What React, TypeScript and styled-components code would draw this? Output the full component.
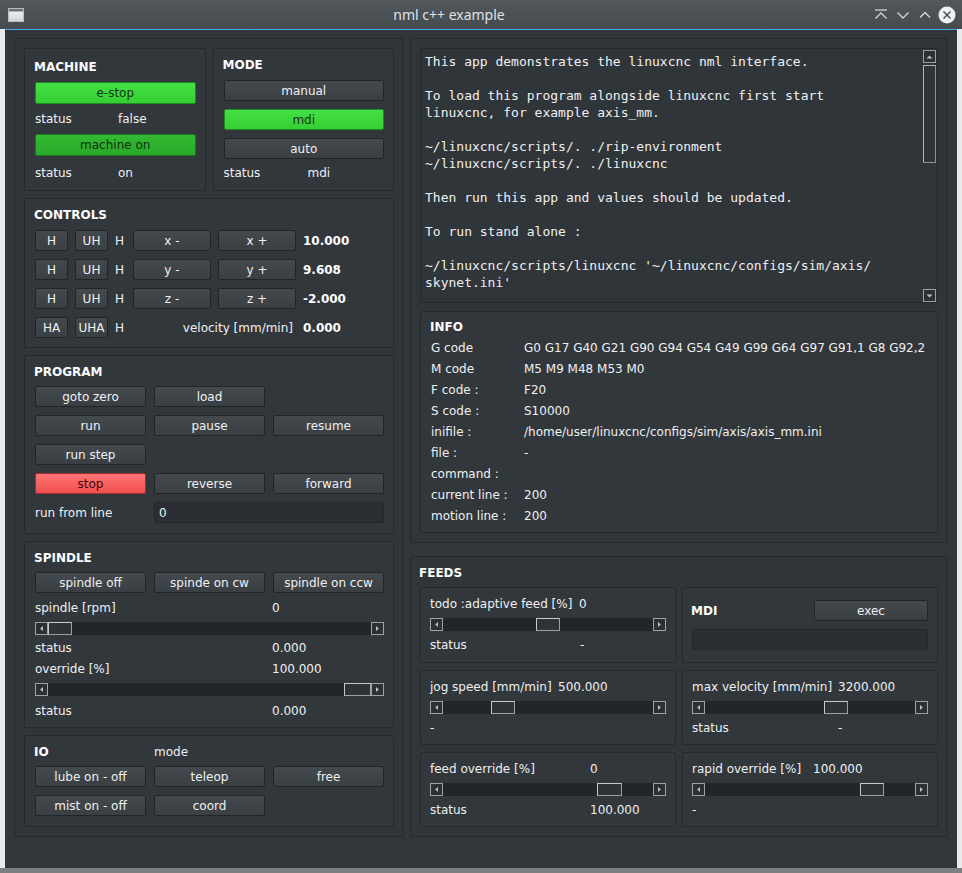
import React from "react";
import styled, { createGlobalStyle, css } from "styled-components";

const GlobalStyle = createGlobalStyle`
  html, body {
    margin: 0;
    padding: 0;
    background: #e9eaeb;
  }
  body {
    font-family: "DejaVu Sans", "Noto Sans", sans-serif;
    font-size: 12px;
    color: #eff0f1;
  }
  * { box-sizing: border-box; }
`;

const Window = styled.div`
  width: 962px;
  height: 873px;
  display: flex;
  flex-direction: column;
  background: #e8e9ea;
  overflow: hidden;
`;

const TitleBar = styled.div`
  height: 29px;
  flex-shrink: 0;
  display: flex;
  align-items: center;
  background: linear-gradient(#52575c, #464b50);
`;

const AppIconSlot = styled.div`
  width: 28px;
  display: flex;
  justify-content: center;
  padding-left: 3px;
`;

const TitleText = styled.div`
  flex: 1;
  text-align: center;
  font-family: "Noto Sans", sans-serif;
  font-size: 14px;
  color: #dfe2e5;
`;

const TitleButtons = styled.div`
  width: 92px;
  display: flex;
  align-items: center;
  gap: 0;
`;

const Body = styled.div`
  flex: 1;
  margin: 0 5px;
  background: #31363b;
  border-top: 1px solid #3daee9;
  padding: 8px 9px 0;
  display: grid;
  grid-template-columns: 390px 538px;
  column-gap: 6px;
  align-items: start;
`;

const BottomEdge = styled.div`
  height: 5px;
  flex-shrink: 0;
  background: #7c7e80;
`;

const Frame = styled.div<{ $h: number }>`
  height: ${(p) => p.$h}px;
  border: 1px solid #26292d;
  border-radius: 2px;
  padding: 9px;
  background: #30353a;
`;

const LeftStack = styled(Frame)`
  display: flex;
  flex-direction: column;
  gap: 7px;
`;

const RightColumn = styled.div`
  display: flex;
  flex-direction: column;
  gap: 13px;
`;

const Box = styled.div<{ $h: number; $pt: number }>`
  height: ${(p) => p.$h}px;
  border: 1px solid #25292c;
  border-radius: 2px;
  background: #32373c;
  padding: ${(p) => p.$pt}px 9px 0 10px;
  display: flex;
  flex-direction: column;
`;

const TopRow = styled.div`
  display: grid;
  grid-template-columns: 1fr 1fr;
  column-gap: 7px;
`;

const Heading = styled.div<{ $mb?: number }>`
  font-weight: bold;
  font-size: 12px;
  line-height: 14px;
  color: #fcfcfc;
  margin-left: -1px;
  margin-bottom: ${(p) => p.$mb ?? 8}px;
`;

const toneStyles = {
  plain: css`
    background: linear-gradient(#44494e, #3a3f44);
    border-color: #222528;
    color: #eff0f1;
  `,
  green: css`
    background: linear-gradient(#45e045, #33cf33);
    border-color: #1f8a1f;
    color: #15341a;
  `,
  greenDark: css`
    background: linear-gradient(#33ba33, #2aa82a);
    border-color: #1b7a1b;
    color: #10300f;
  `,
  red: css`
    background: linear-gradient(#ff7474, #f05050);
    border-color: #a82c2c;
    color: #3d0707;
  `,
};

type Tone = keyof typeof toneStyles;

const Button = styled.div<{ $tone?: Tone; $h?: number; $mb?: number }>`
  height: ${(p) => p.$h ?? 21}px;
  margin-bottom: ${(p) => p.$mb ?? 0}px;
  border: 1px solid;
  border-radius: 2px;
  display: flex;
  align-items: center;
  justify-content: center;
  font-size: 12px;
  white-space: nowrap;
  ${(p) => toneStyles[p.$tone ?? "plain"]}
`;

const StatusLine = styled.div<{ $col: number; $h: number }>`
  display: grid;
  grid-template-columns: ${(p) => p.$col}px 1fr;
  height: ${(p) => p.$h}px;
  align-items: center;
`;

const AxisGrid = styled.div`
  display: grid;
  grid-template-columns: 33px 33px 11px 78px 78px auto;
  column-gap: 7px;
  row-gap: 8px;
  grid-auto-rows: 21px;
  align-items: center;
`;

const BoldValue = styled.div`
  font-weight: bold;
  color: #fcfcfc;
`;

const VelocityLabel = styled.div`
  grid-column: 4 / span 2;
  text-align: right;
  padding-right: 3px;
`;

const ThreeGrid = styled.div<{ $mt?: number }>`
  display: grid;
  grid-template-columns: repeat(3, 1fr);
  column-gap: 8px;
  row-gap: 8px;
  grid-auto-rows: 21px;
  align-items: center;
  margin-top: ${(p) => p.$mt ?? 0}px;
`;

const Input = styled.div<{ $span?: number }>`
  grid-column: ${(p) => (p.$span ? `span ${p.$span}` : "auto")};
  height: 21px;
  border: 1px solid #25292c;
  border-radius: 2px;
  background: #2b2f33;
  display: flex;
  align-items: center;
  padding-left: 4px;
`;

const ValueRow = styled.div<{ $col: number; $h: number; $mt?: number }>`
  display: grid;
  grid-template-columns: ${(p) => p.$col}px 1fr;
  height: ${(p) => p.$h}px;
  margin-top: ${(p) => p.$mt ?? 0}px;
  align-items: center;
  white-space: nowrap;
`;

const IoHead = styled.div`
  display: grid;
  grid-template-columns: repeat(3, 1fr);
  column-gap: 8px;
  align-items: center;
  margin-bottom: 7px;
  line-height: 14px;
`;

/* slider */

const SliderBar = styled.div<{ $mt?: number }>`
  height: 13px;
  display: flex;
  background: #232629;
  margin-top: ${(p) => p.$mt ?? 0}px;
`;

const StepArrow = styled.div`
  width: 13px;
  height: 13px;
  flex-shrink: 0;
  border: 1px solid #9ea2a6;
  background: #2c3034;
  display: flex;
  align-items: center;
  justify-content: center;
`;

const Groove = styled.div`
  flex: 1;
  display: flex;
`;

const Handle = styled.div<{ $w: number }>`
  width: ${(p) => p.$w}px;
  height: 13px;
  flex-shrink: 0;
  border: 1px solid #c6c8ca;
  border-right-color: #9da0a3;
  border-bottom-color: #9da0a3;
  background: #2f3337;
`;

type Dir = "left" | "right" | "up" | "down";

const arrowPoints: Record<Dir, string> = {
  left: "4,1 1,3.5 4,6",
  right: "1,1 4,3.5 1,6",
  up: "0.5,4.5 3.5,1.5 6.5,4.5",
  down: "0.5,1.5 3.5,4.5 6.5,1.5",
};

const Arrow = ({ dir }: { dir: Dir }) => (
  <StepArrow>
    <svg width={dir === "up" || dir === "down" ? 7 : 5} height={dir === "up" || dir === "down" ? 6 : 7}>
      <polygon points={arrowPoints[dir]} fill="#b9bcbf" />
    </svg>
  </StepArrow>
);

const Slider = ({ pos, w = 24, mt }: { pos: number; w?: number; mt?: number }) => (
  <SliderBar $mt={mt}>
    <Arrow dir="left" />
    <Groove>
      <div style={{ flexGrow: pos }} />
      <Handle $w={w} />
      <div style={{ flexGrow: 1 - pos }} />
    </Groove>
    <Arrow dir="right" />
  </SliderBar>
);

/* text area */

const TextArea = styled.div`
  height: 255px;
  border: 1px solid #25292c;
  border-radius: 2px;
  background: #30353a;
  display: flex;
`;

const MonoText = styled.pre`
  flex: 1;
  margin: 0;
  padding: 4px 4px;
  font-family: "DejaVu Sans Mono", "Liberation Mono", monospace;
  font-size: 13px;
  line-height: 17px;
  color: #eff0f1;
  overflow: hidden;
`;

const ScrollBar = styled.div`
  width: 13px;
  margin: 1px 1px 0 0;
  display: flex;
  flex-direction: column;
`;

const Thumb = styled.div`
  height: 98px;
  margin-top: 2px;
  border: 1px solid #b3b6b9;
  border-right-color: #8f9397;
  border-bottom-color: #8f9397;
  background: #30353a;
`;

const Filler = styled.div`
  flex: 1;
`;

/* info */

const InfoBox = styled(Box)`
  margin-top: 8px;
  padding-top: 8px;
`;

const InfoRow = styled.div`
  display: grid;
  grid-template-columns: 93px 1fr;
  height: 21px;
  align-items: center;
  white-space: nowrap;
`;

/* feeds */

const FeedGrid = styled.div`
  display: grid;
  grid-template-columns: 1fr 1fr;
  grid-template-rows: 76px 75px 75px;
  column-gap: 6px;
  row-gap: 7px;
`;

const FeedBox = styled.div<{ $pt?: number }>`
  border: 1px solid #25292c;
  border-radius: 2px;
  background: #32373c;
  padding: ${(p) => p.$pt ?? 7}px 9px 0;
  display: flex;
  flex-direction: column;
`;

const FeedLine = styled.div<{ $col: number; $h: number }>`
  display: grid;
  grid-template-columns: ${(p) => p.$col}px 1fr;
  height: ${(p) => p.$h}px;
  align-items: center;
  white-space: nowrap;
`;

const MdiHead = styled.div`
  display: grid;
  grid-template-columns: 1fr 114px;
  align-items: center;
  height: 21px;
  margin-bottom: 8px;
`;

/* title bar icons */

const IconBtn = styled.div<{ $w: number }>`
  width: ${(p) => p.$w}px;
  height: 29px;
  display: flex;
  align-items: center;
  justify-content: center;
`;

const AppIcon = () => (
  <svg width="16" height="14" viewBox="0 0 16 14">
    <defs>
      <linearGradient id="appg" x1="0" y1="0" x2="0" y2="1">
        <stop offset="0" stopColor="#f4f4f4" />
        <stop offset="1" stopColor="#d4d6d8" />
      </linearGradient>
    </defs>
    <rect x="0.5" y="0.5" width="15" height="13" fill="url(#appg)" stroke="#b9bbbd" />
    <rect x="1" y="1" width="14" height="2.5" fill="#6b7075" />
  </svg>
);

const stroke = "#d3d6d9";

const KeepAbove = () => (
  <svg width="14" height="14" viewBox="0 0 14 14">
    <line x1="1" y1="2" x2="13" y2="2" stroke={stroke} strokeWidth="1.3" />
    <polyline points="1.5,10.5 7,5 12.5,10.5" fill="none" stroke={stroke} strokeWidth="1.3" />
  </svg>
);

const Minimize = () => (
  <svg width="14" height="14" viewBox="0 0 14 14">
    <polyline points="1.5,4.5 7,10 12.5,4.5" fill="none" stroke={stroke} strokeWidth="1.3" />
  </svg>
);

const Maximize = () => (
  <svg width="14" height="14" viewBox="0 0 14 14">
    <polyline points="2,9.5 7,4.5 12,9.5" fill="none" stroke={stroke} strokeWidth="1.3" />
  </svg>
);

const CloseIcon = () => (
  <svg width="18" height="18" viewBox="0 0 18 18">
    <circle cx="9" cy="9" r="8.5" fill="#eef0f1" />
    <line x1="5.5" y1="5.5" x2="12.5" y2="12.5" stroke="#4b5055" strokeWidth="1.4" />
    <line x1="12.5" y1="5.5" x2="5.5" y2="12.5" stroke="#4b5055" strokeWidth="1.4" />
  </svg>
);

const helpText = `This app demonstrates the linuxcnc nml interface.

To load this program alongside linuxcnc first start
linuxcnc, for example axis_mm.

~/linuxcnc/scripts/. ./rip-environment
~/linuxcnc/scripts/. ./linuxcnc

Then run this app and values should be updated.

To run stand alone :

~/linuxcnc/scripts/linuxcnc '~/linuxcnc/configs/sim/axis/
skynet.ini'`;

const info: [string, string][] = [
  ["G code", "G0 G17 G40 G21 G90 G94 G54 G49 G99 G64 G97 G91,1 G8 G92,2"],
  ["M code", "M5 M9 M48 M53 M0"],
  ["F code :", "F20"],
  ["S code :", "S10000"],
  ["inifile :", "/home/user/linuxcnc/configs/sim/axis/axis_mm.ini"],
  ["file :", "-"],
  ["command :", ""],
  ["current line :", "200"],
  ["motion line :", "200"],
];

const axes = [
  { a: "x", v: "10.000" },
  { a: "y", v: "9.608" },
  { a: "z", v: "-2.000" },
];

export default function App() {
  return (
    <>
      <GlobalStyle />
      <Window>
        <TitleBar>
          <AppIconSlot>
            <AppIcon />
          </AppIconSlot>
          <TitleText>nml c++ example</TitleText>
          <TitleButtons>
            <IconBtn $w={22}><KeepAbove /></IconBtn>
            <IconBtn $w={22}><Minimize /></IconBtn>
            <IconBtn $w={22}><Maximize /></IconBtn>
            <IconBtn $w={22}><CloseIcon /></IconBtn>
          </TitleButtons>
        </TitleBar>

        <Body>
          <LeftStack $h={799}>
            <TopRow>
              <Box $h={143} $pt={11}>
                <Heading>MACHINE</Heading>
                <Button $tone="green" $h={22}>e-stop</Button>
                <StatusLine $col={83} $h={30}>
                  <span>status</span>
                  <span>false</span>
                </StatusLine>
                <Button $tone="greenDark" $h={22}>machine on</Button>
                <StatusLine $col={83} $h={34}>
                  <span>status</span>
                  <span>on</span>
                </StatusLine>
              </Box>
              <Box $h={143} $pt={9}>
                <Heading>MODE</Heading>
                <Button $mb={8}>manual</Button>
                <Button $tone="green" $mb={8}>mdi</Button>
                <Button>auto</Button>
                <StatusLine $col={84} $h={28}>
                  <span>status</span>
                  <span>mdi</span>
                </StatusLine>
              </Box>
            </TopRow>

            <Box $h={150} $pt={9}>
              <Heading>CONTROLS</Heading>
              <AxisGrid>
                {axes.map(({ a, v }) => (
                  <React.Fragment key={a}>
                    <Button>H</Button>
                    <Button>UH</Button>
                    <span>H</span>
                    <Button>{a} -</Button>
                    <Button>{a} +</Button>
                    <BoldValue>{v}</BoldValue>
                  </React.Fragment>
                ))}
                <Button>HA</Button>
                <Button>UHA</Button>
                <span>H</span>
                <VelocityLabel>velocity [mm/min]</VelocityLabel>
                <BoldValue>0.000</BoldValue>
              </AxisGrid>
            </Box>

            <Box $h={179} $pt={9}>
              <Heading $mb={7}>PROGRAM</Heading>
              <ThreeGrid>
                <Button>goto zero</Button>
                <Button>load</Button>
                <span />
                <Button>run</Button>
                <Button>pause</Button>
                <Button>resume</Button>
                <Button>run step</Button>
                <span />
                <span />
                <Button $tone="red">stop</Button>
                <Button>reverse</Button>
                <Button>forward</Button>
              </ThreeGrid>
              <ThreeGrid $mt={8}>
                <span>run from line</span>
                <Input $span={2}>0</Input>
              </ThreeGrid>
            </Box>

            <Box $h={187} $pt={9}>
              <Heading $mb={7}>SPINDLE</Heading>
              <ThreeGrid>
                <Button>spindle off</Button>
                <Button>spinde on cw</Button>
                <Button>spindle on ccw</Button>
              </ThreeGrid>
              <ValueRow $col={237} $h={29}>
                <span>spindle [rpm]</span>
                <span>0</span>
              </ValueRow>
              <Slider pos={0} />
              <ValueRow $col={237} $h={26}>
                <span>status</span>
                <span>0.000</span>
              </ValueRow>
              <ValueRow $col={237} $h={16}>
                <span>override [%]</span>
                <span>100.000</span>
              </ValueRow>
              <Slider pos={1} w={27} mt={6} />
              <ValueRow $col={237} $h={30}>
                <span>status</span>
                <span>0.000</span>
              </ValueRow>
            </Box>

            <Box $h={92} $pt={9}>
              <IoHead>
                <Heading $mb={0}>IO</Heading>
                <span>mode</span>
              </IoHead>
              <ThreeGrid>
                <Button>lube on - off</Button>
                <Button>teleop</Button>
                <Button>free</Button>
                <Button>mist on - off</Button>
                <Button>coord</Button>
              </ThreeGrid>
            </Box>
          </LeftStack>

          <RightColumn>
            <Frame $h={505}>
              <TextArea>
                <MonoText>{helpText}</MonoText>
                <ScrollBar>
                  <Arrow dir="up" />
                  <Thumb />
                  <Filler />
                  <Arrow dir="down" />
                </ScrollBar>
              </TextArea>
              <InfoBox $h={222} $pt={8}>
                <Heading $mb={3}>INFO</Heading>
                {info.map(([k, v]) => (
                  <InfoRow key={k}>
                    <span>{k}</span>
                    <span>{v}</span>
                  </InfoRow>
                ))}
              </InfoBox>
            </Frame>

            <Frame $h={281}>
              <Heading $mb={7}>FEEDS</Heading>
              <FeedGrid>
                <FeedBox>
                  <FeedLine $col={149} $h={18}>
                    <span>todo :adaptive feed [%]</span>
                    <span>0</span>
                  </FeedLine>
                  <Slider pos={0.5} mt={5} />
                  <FeedLine $col={150} $h={28}>
                    <span>status</span>
                    <span>-</span>
                  </FeedLine>
                </FeedBox>

                <FeedBox $pt={12}>
                  <MdiHead>
                    <Heading $mb={0}>MDI</Heading>
                    <Button>exec</Button>
                  </MdiHead>
                  <Input />
                </FeedBox>

                <FeedBox>
                  <FeedLine $col={128} $h={18}>
                    <span>jog speed [mm/min]</span>
                    <span>500.000</span>
                  </FeedLine>
                  <Slider pos={0.258} mt={5} />
                  <FeedLine $col={128} $h={28}>
                    <span>-</span>
                    <span />
                  </FeedLine>
                </FeedBox>

                <FeedBox>
                  <FeedLine $col={146} $h={18}>
                    <span>max velocity [mm/min]</span>
                    <span>3200.000</span>
                  </FeedLine>
                  <Slider pos={0.638} mt={5} />
                  <FeedLine $col={146} $h={28}>
                    <span>status</span>
                    <span>-</span>
                  </FeedLine>
                </FeedBox>

                <FeedBox>
                  <FeedLine $col={160} $h={18}>
                    <span>feed override [%]</span>
                    <span>0</span>
                  </FeedLine>
                  <Slider pos={0.83} w={25} mt={5} />
                  <FeedLine $col={160} $h={28}>
                    <span>status</span>
                    <span>100.000</span>
                  </FeedLine>
                </FeedBox>

                <FeedBox>
                  <FeedLine $col={121} $h={18}>
                    <span>rapid override [%]</span>
                    <span>100.000</span>
                  </FeedLine>
                  <Slider pos={0.832} mt={5} />
                  <FeedLine $col={121} $h={28}>
                    <span>-</span>
                    <span />
                  </FeedLine>
                </FeedBox>
              </FeedGrid>
            </Frame>
          </RightColumn>
        </Body>
        <BottomEdge />
      </Window>
    </>
  );
}
